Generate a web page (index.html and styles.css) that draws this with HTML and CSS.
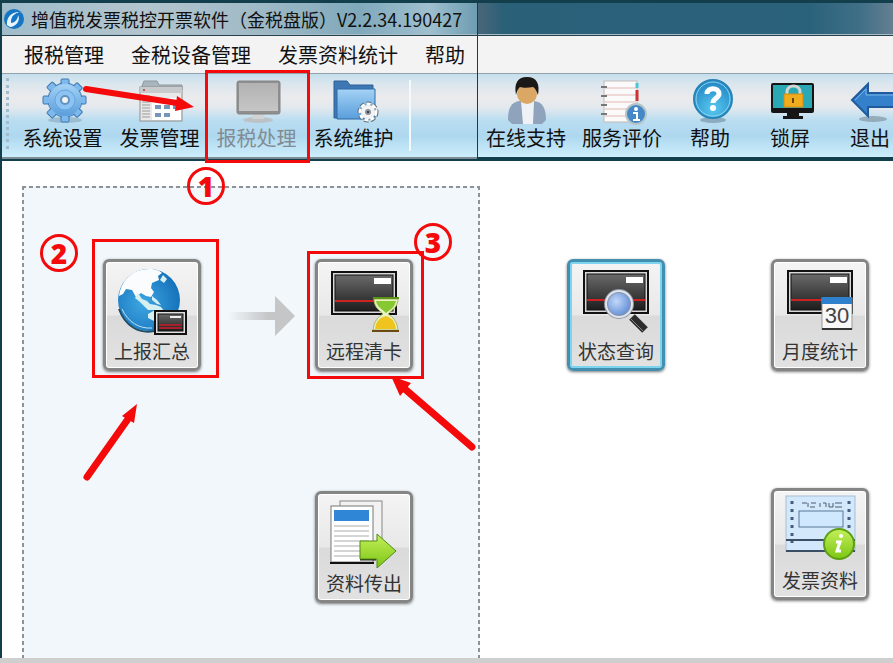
FILE: index.html
```html
<!DOCTYPE html>
<html lang="zh-CN">
<head>
  <meta charset="UTF-8">
  <meta name="viewport" content="width=device-width, initial-scale=1">
  <title>增值税发票税控开票软件</title>
  <link rel="stylesheet" href="styles.css">
</head>
<body>
  <!-- shared gradients and the invoice card symbol -->
  <svg class="defs" width="0" height="0" aria-hidden="true">
    <defs>
      <linearGradient id="blue" x1="0" y1="0" x2="0" y2="1"><stop offset="0" stop-color="#a4d2f5"/><stop offset="1" stop-color="#5a9edc"/></linearGradient>
      <linearGradient id="dark" x1="0" y1="0" x2="0" y2="1"><stop offset="0" stop-color="#6a6a6a"/><stop offset="1" stop-color="#1d1d1d"/></linearGradient>
      <linearGradient id="green" x1="0" y1="0" x2="0" y2="1"><stop offset="0" stop-color="#c4f05a"/><stop offset="1" stop-color="#7cc514"/></linearGradient>
      <linearGradient id="gray" x1="0" y1="0" x2="0" y2="1"><stop offset="0" stop-color="#b2b2b2"/><stop offset="1" stop-color="#c6c6c6"/></linearGradient>
      <linearGradient id="fade" x1="0" y1="0" x2="1" y2="0"><stop offset="0" stop-color="#c4c6c8" stop-opacity="0"/><stop offset="0.6" stop-color="#c4c6c8"/></linearGradient>
      <radialGradient id="ball" cx="0.5" cy="0.75" r="0.8"><stop offset="0" stop-color="#58c8f0"/><stop offset="1" stop-color="#1b7fc0"/></radialGradient>
      <radialGradient id="earth" cx="0.4" cy="0.55" r="0.6"><stop offset="0" stop-color="#3fa6e2"/><stop offset="1" stop-color="#1673bb"/></radialGradient>
      <radialGradient id="lens" cx="0.4" cy="0.4" r="0.7"><stop offset="0" stop-color="#c3d8fa"/><stop offset="1" stop-color="#4f7fd0"/></radialGradient>
      <symbol id="card" viewBox="0 0 66 44">
        <rect x="1" y="1" width="64" height="42" fill="#d8d8d8" stroke="#111" stroke-width="2"/>
        <rect x="4" y="4" width="58" height="36" fill="url(#dark)" stroke="#111" stroke-width="1"/>
        <rect x="43" y="7" width="17" height="6" fill="#fff"/>
        <path d="M4 30H62" stroke="#c22" stroke-width="2"/>
      </symbol>
    </defs>
  </svg>

  <header class="app-head">
    <div class="pane pane-left">
      <div class="titlebar">
        <svg class="logo" viewBox="0 0 22 22"><circle cx="11" cy="11" r="10" fill="#1676c4"/><path d="M4 17C3 9 9 3 18 4C12 5 8 9 8 15C12 15 15 11 15 7C18 12 13 19 7 19" fill="#e6f5ff"/><path d="M9 14C9 9 13 6 17 5" fill="none" stroke="#1676c4" stroke-width="2"/></svg>
        <h1>增值税发票税控开票软件（金税盘版）V2.2.34.190427</h1>
      </div>
      <nav class="menubar">
        <button type="button">报税管理</button>
        <button type="button">金税设备管理</button>
        <button type="button">发票资料统计</button>
        <button type="button">帮助</button>
      </nav>
      <div class="toolbar toolbar-main">
        <div class="target">
          <button type="button" class="tool">
            <svg viewBox="0 0 46 46">
              <ellipse cx="25" cy="42" rx="17" ry="3" fill="#7d9bb0" opacity="0.5"/>
              <g fill="#7db9ec" stroke="#3f79b0">
                <rect x="21" y="1" width="8" height="43" rx="1"/>
                <rect x="21" y="1" width="8" height="43" rx="1" transform="rotate(45 25 22)"/>
                <rect x="21" y="1" width="8" height="43" rx="1" transform="rotate(90 25 22)"/>
                <rect x="21" y="1" width="8" height="43" rx="1" transform="rotate(135 25 22)"/>
                <circle cx="25" cy="22" r="17"/>
              </g>
              <path d="M25 3v38M6 22h38M12 9l26 26M38 9L12 35" stroke="#7db9ec" stroke-width="6"/>
              <circle cx="25" cy="22" r="16" fill="url(#blue)"/>
              <circle cx="25" cy="22" r="10" fill="#8cc3f2" stroke="#66a5de"/>
              <circle cx="25" cy="22" r="4" fill="#f1f3f4" stroke="#5f92c0" stroke-width="2"/>
            </svg>
            <span>系统设置</span>
          </button>
          <svg class="mark arrow-one" viewBox="0 0 114 32"><path d="M5 7L96 21" stroke="#f40a0a" stroke-width="6" stroke-linecap="round"/><path d="M96 14L113 25L94 29Z" fill="#f40a0a"/></svg>
        </div>
        <button type="button" class="tool">
          <svg viewBox="0 0 46 46">
            <path d="M5 8l2-5h13l2 4h23v5H5z" fill="#a9b5bd" stroke="#8d979d"/>
            <rect x="3" y="9" width="42" height="34" fill="#e9e9ea" stroke="#8f8f90"/>
            <rect x="3" y="9" width="42" height="6" fill="#c9cacb"/>
            <rect x="15" y="20" width="29" height="22" fill="#fff"/>
            <path d="M5 18h8M5 21h8M5 24h8M5 27h8M5 30h8M5 33h8M5 36h8M5 39h8" stroke="#999"/>
            <path d="M18 29h6M27 29h6M36 29h6M18 37h6M27 37h6" stroke="#7795b8" stroke-width="4"/>
            <circle cx="7" cy="12" r="1" fill="#b33"/>
          </svg>
          <span>发票管理</span>
        </button>
        <div class="target">
          <button type="button" class="tool" disabled>
            <svg viewBox="0 0 46 46">
              <ellipse cx="24" cy="42" rx="15" ry="3" fill="#bcc2c5"/>
              <path d="M19 35h10l1 6H18z" fill="#d2d2d2"/>
              <rect x="3" y="3" width="43" height="33" rx="2" fill="#8f8f8f" stroke="#848484"/>
              <rect x="5" y="5" width="39" height="28" fill="url(#gray)"/>
            </svg>
            <span>报税处理</span>
          </button>
          <div class="mark frame frame-one"></div>
          <b class="mark badge badge-one">1</b>
        </div>
        <button type="button" class="tool">
          <svg viewBox="0 0 46 46">
            <path d="M3 40V3h13l3 4h23v33z" fill="#3d78b4" stroke="#2c5f97"/>
            <path d="M6 41V11h38v30z" fill="url(#blue)" stroke="#2f6aa6"/>
            <circle cx="37" cy="34" r="8" fill="none" stroke="#5d6a74" stroke-width="5" stroke-dasharray="4 2"/>
            <circle cx="37" cy="34" r="8" fill="none" stroke="#fff" stroke-width="3" stroke-dasharray="4 2"/>
            <circle cx="37" cy="34" r="7" fill="#f3f3f3"/>
            <circle cx="37" cy="34" r="3" fill="#8b9299"/><circle cx="37" cy="34" r="1" fill="#222"/>
          </svg>
          <span>系统维护</span>
        </button>
        <i class="divider"></i>
      </div>
    </div>

    <div class="pane pane-right">
      <div class="titlebar"></div>
      <div class="menubar"></div>
      <div class="toolbar">
        <button type="button" class="tool">
          <svg viewBox="0 0 46 46">
            <path d="M5 42c0-12 3-18 12-19h14c9 1 12 8 12 19l-4 4H9z" fill="#8fa3bd"/>
            <path d="M18 23h13l-1 23H20z" fill="#eef2f6"/>
            <circle cx="24" cy="16" r="10" fill="#dba765"/>
            <path d="M13 17C11 6 14-1 24-1s13 7 11 18c-2-5-3-7-5-8-5 1-10 1-13 0-2 2-3 4-4 8z" fill="#1b1818"/>
          </svg>
          <span>在线支持</span>
        </button>
        <button type="button" class="tool">
          <svg viewBox="0 0 46 46">
            <rect x="5" y="3" width="33" height="41" fill="#fafafa" stroke="#c3b9b9"/>
            <path d="M6 10h31M6 17h31M6 24h31M6 31h31M6 38h31" stroke="#e3b7b4"/>
            <path d="M2 9h6M2 18h6M2 27h6M2 36h6" stroke="#777" stroke-width="2"/>
            <path d="M38 5v5" stroke="#4cc5d6" stroke-width="3"/><path d="M38 12v11" stroke="#c33" stroke-width="3"/>
            <circle cx="37" cy="36" r="10" fill="#4488c8" stroke="#b5c4c8" stroke-width="2"/>
            <circle cx="37" cy="31" r="2" fill="#fff"/><path d="M34 35h4v7M34 42h7" stroke="#fff" stroke-width="2" fill="none"/>
          </svg>
          <span>服务评价</span>
        </button>
        <button type="button" class="tool tool-narrow">
          <svg viewBox="0 0 46 46">
            <ellipse cx="26" cy="42" rx="13" ry="3" fill="#7895a8" opacity="0.7"/>
            <circle cx="26" cy="21" r="19" fill="url(#ball)" stroke="#2784b8" stroke-width="2"/>
            <circle cx="26" cy="21" r="17" fill="none" stroke="#8fd7f2"/>
            <path d="M20 16c0-7 12-7 12 0 0 4-6 4-6 9" fill="none" stroke="#fff" stroke-width="5"/><circle cx="26" cy="30" r="3" fill="#fff"/>
          </svg>
          <span>帮助</span>
        </button>
        <button type="button" class="tool tool-narrow">
          <svg viewBox="0 0 46 46">
            <path d="M20 34h12v4h4v3H16v-3h4z" fill="#161616"/>
            <rect x="4" y="5" width="43" height="30" rx="2" fill="#151515"/>
            <rect x="6" y="7" width="39" height="23" fill="#2aa9b4"/>
            <path d="M20 19v-5c0-8 13-8 13 0v5" fill="none" stroke="#d3d7d3" stroke-width="3"/>
            <rect x="17" y="16" width="19" height="13" fill="#f0ac1d" stroke="#d48b10"/>
            <path d="M26 20v5" stroke="#6c4310" stroke-width="2"/>
          </svg>
          <span>锁屏</span>
        </button>
        <button type="button" class="tool tool-narrow">
          <svg viewBox="0 0 46 46">
            <ellipse cx="26" cy="41" rx="14" ry="3" fill="#798a98" opacity="0.6"/>
            <path d="M5 22L21 6v9h32v14H21v9z" fill="#3580cb" stroke="#215a9c" stroke-width="2"/>
            <path d="M8 22L19 11v6h32" fill="none" stroke="#77b4e8"/>
          </svg>
          <span>退出</span>
        </button>
      </div>
    </div>
  </header>

  <main class="workspace">
    <section class="flow">
      <div class="target">
        <button type="button" class="tile">
          <svg viewBox="7 6 84 76">
            <circle cx="46" cy="41" r="31" fill="url(#earth)"/>
            <path d="M16 37C18 22 29 10 46 10c7 0 11 2 13 4l-4 3 1 4-7 3-1 5 3 4-3 5-5-1-5-3-5 4-4-7-6-1-3 5z" fill="#fafcfd"/>
            <path d="M35 34l4 6 5 2 3 3 6 1 5 2 3 4-4 1-6-2-6 0-4-4-4-4-5-4zM49 37l5 4 4 5-4-1-5-4zM57 21l3-5 4 4-3 4zM45 55l7-4 6 3v8h-7l-6-3z" fill="#d6f0f1"/>
            <path d="M16 50C22 67 36 75 51 72" fill="none" stroke="#1f4f68" stroke-width="2"/>
            <path d="M19 50C25 63 36 70 49 69" fill="none" stroke="#bfe3f5" stroke-width="1"/>
            <rect x="52" y="52" width="31" height="23" fill="#e0e0e0" stroke="#111" stroke-width="2"/>
            <rect x="55" y="55" width="25" height="17" fill="url(#dark)" stroke="#111"/>
            <path d="M56 66h23M56 69h23" stroke="#a5202a" stroke-width="2"/>
            <path d="M67 58h11" stroke="#eee" stroke-width="2"/>
          </svg>
          <span>上报汇总</span>
        </button>
        <div class="mark frame frame-two"></div>
        <b class="mark badge badge-two">2</b>
        <svg class="mark arrow-two" viewBox="0 0 60 84"><path d="M7 77L48 19" stroke="#f40a0a" stroke-width="7" stroke-linecap="round"/><path d="M57 4L42 16L54 23Z" fill="#f40a0a"/></svg>
      </div>
      <svg class="step" viewBox="0 0 68 42"><path d="M0 17H47V1L67 21L47 41V25H0Z" fill="url(#fade)"/></svg>
      <div class="target">
        <button type="button" class="tile">
          <svg viewBox="7 6 84 76">
            <use href="#card" x="16" y="12" width="66" height="44"/>
            <path d="M59 40h24c0 8-6 11-10 15 5 3 9 7 10 16H58c1-9 5-13 10-16-4-4-9-7-9-15z" fill="#e9f2c5" stroke="#a9b760"/>
            <path d="M61 42h20c-1 6-6 9-10 12-4-4-9-6-10-12z" fill="#86c732"/>
            <path d="M60 70c1-9 5-11 11-13 6 2 9 5 10 13z" fill="#efc41e"/>
            <path d="M58 39h26" stroke="#5b9415" stroke-width="2"/><path d="M57 72h27" stroke="#6b4a14" stroke-width="2"/>
          </svg>
          <span>远程清卡</span>
        </button>
        <div class="mark frame frame-three"></div>
        <b class="mark badge badge-three">3</b>
        <svg class="mark arrow-three" viewBox="0 0 90 80"><path d="M83 73L17 16" stroke="#f40a0a" stroke-width="7" stroke-linecap="round"/><path d="M2 2L22 9L11 22Z" fill="#f40a0a"/></svg>
      </div>
      <button type="button" class="tile tile-export">
        <svg viewBox="7 6 84 76">
          <rect x="25" y="10" width="42" height="54" fill="#f2f2f2" stroke="#888"/>
          <rect x="16" y="15" width="42" height="56" fill="#fff" stroke="#777"/>
          <rect x="19" y="19" width="35" height="11" fill="#2f86d6"/>
          <path d="M19 35h35M19 40h35M19 45h35M19 50h35M19 55h35M19 60h35M19 65h35" stroke="#aaa"/>
          <path d="M15 72h44" stroke="#111" stroke-width="2"/>
          <path d="M45 68h16" stroke="#222" stroke-width="3"/>
          <path d="M45 50h17v-7l19 17-19 17v-9H45z" fill="url(#green)" stroke="#4f8a12"/>
        </svg>
        <span>资料传出</span>
      </button>
    </section>

    <section class="queries">
      <button type="button" class="tile active">
        <svg viewBox="7 6 84 76">
          <use href="#card" x="16" y="11" width="66" height="44"/>
          <path d="M65 58L78 71" stroke="#2c2c2c" stroke-width="8"/>
          <path d="M64 60L77 73" stroke="#888" stroke-width="1"/>
          <circle cx="52" cy="45" r="13" fill="url(#lens)" stroke="#8d95a5" stroke-width="4"/>
          <circle cx="52" cy="45" r="13" fill="none" stroke="#dfe5ee" stroke-width="2"/>
        </svg>
        <span>状态查询</span>
      </button>
      <button type="button" class="tile">
        <svg viewBox="7 6 84 76">
          <use href="#card" x="16" y="11" width="66" height="44"/>
          <rect x="51" y="39" width="30" height="31" fill="#f8f8f8" stroke="#999"/>
          <rect x="51" y="38" width="30" height="7" fill="#2f80cc"/>
          <path d="M51 70h30" stroke="#333" stroke-width="2"/>
          <text class="day" x="66" y="64" text-anchor="middle">30</text>
        </svg>
        <span>月度统计</span>
      </button>
      <button type="button" class="tile tile-invoice">
        <svg viewBox="7 6 84 76">
          <rect x="15" y="8" width="69" height="55" fill="#d3e8fb" stroke="#a5bdd5"/>
          <path d="M21 13v42M78 13v30" stroke="#445f7d" stroke-width="3" stroke-dasharray="3 5"/>
          <path d="M31 15h5M37 15v4M39 19h5M40 15h5M49 15v4M52 15h3v4M58 15v4h4v-4M64 15h7M64 19h7" stroke="#4c5d70" fill="none"/>
          <rect x="28" y="23" width="44" height="16" fill="#cfe8fd" stroke="#5b7896"/>
          <path d="M15 52h69M15 63h69" stroke="#3a4f64" stroke-width="2"/>
          <circle cx="68" cy="56" r="15" fill="url(#green)" stroke="#5c9f12" stroke-width="2"/>
          <circle cx="70" cy="48" r="2" fill="#fff"/><path d="M65 54h4l-3 9h4" fill="none" stroke="#fff" stroke-width="3"/>
        </svg>
        <span>发票资料</span>
      </button>
    </section>
  </main>
  <footer class="statusbar"></footer>
</body>
</html>
```
FILE: styles.css
```css
* {
  box-sizing: border-box;
}
body {
  margin: 0;
  min-height: 100vh;
  display: flex;
  flex-direction: column;
  font-family: "Noto Sans CJK SC", sans-serif;
  background: #fff;
  color: #111;
  overflow-x: hidden;
}
button {
  font: inherit;
  color: inherit;
  border: 0;
  padding: 0;
  background: none;
  white-space: nowrap;
}
svg {
  display: block;
  overflow: visible;
}
.defs {
  position: absolute;
}

/* header */
.app-head {
  position: relative;
  z-index: 1;
  display: flex;
  padding: 3px 0 0 2px;
  background: #123f4b;
}
.pane-left {
  flex: 0 0 475px;
  border-bottom: 2px solid #7c8c94;
  margin-bottom: 2px;
}
.pane-right {
  flex: 1;
  min-width: 0;
  overflow: hidden;
  margin-left: 1px;
  margin-bottom: 4px;
}
.titlebar {
  height: 33px;
  display: flex;
  align-items: center;
  gap: 6px;
  padding-left: 1px;
  border-bottom: 1px solid #24424f;
  box-shadow: inset 0 -1px #a9bcc6;
  background: linear-gradient(90deg, #9fbccb, #b3c5ce 30%, #9eb9c6 55%, #7fa9bb 75%, #9fbfce 90%, #6d9db1);
}
.pane-right .titlebar {
  background: linear-gradient(90deg, #4a6678, #2b6079 6%, #2b627b 80%, #3f6f87 92%, #667f91);
}
.titlebar h1 {
  margin: 0;
  font-size: 18px;
  font-weight: 400;
  line-height: 24px;
  white-space: nowrap;
}
.logo {
  width: 22px;
  height: 22px;
}
.menubar {
  height: 38px;
  display: flex;
  align-items: center;
  gap: 27px;
  padding-left: 22px;
  font-size: 20px;
  border-bottom: 1px solid #93a1a8;
  background: #f3f3f4;
}
.toolbar {
  height: 83px;
  display: flex;
  background: linear-gradient(#c5dfed, #dbe6ed 12%, #ebebed 28%, #e4e9ee 40%, #b9ddf1 56%, #aed8ef 75%, #cdeefb);
}
.toolbar-main {
  padding-left: 12px;
  position: relative;
}
.toolbar-main::before {
  content: "";
  position: absolute;
  left: 4px;
  top: 4px;
  bottom: 8px;
  border-left: 3px dotted #a3bccb;
}
.tool {
  flex: none;
  width: 97px;
  padding-top: 4px;
  display: flex;
  flex-direction: column;
  align-items: center;
  font-size: 20px;
  line-height: 28px;
}
.pane-right .tool {
  width: 96px;
}
.pane-right .tool-narrow {
  width: 80px;
}
.tool svg {
  width: 46px;
  height: 46px;
}
.tool:disabled {
  color: #838c92;
}
.divider {
  width: 2px;
  margin: 6px 0 6px 7px;
  background: #f4fafc;
}

/* workspace */
.workspace {
  flex: 1;
  display: flex;
  align-items: stretch;
  padding: 25px 0 0 20px;
  border-left: 2px solid #123f4b;
}
.flow {
  flex: 0 0 458px;
  display: grid;
  grid-template-columns: 98px 114px 98px;
  align-content: start;
  gap: 120px 0;
  padding: 73px 0 48px 81px;
  background:
    repeating-linear-gradient(90deg, #8d9296 0 4px, transparent 4px 7px) 0 0 / 100% 2px no-repeat,
    repeating-linear-gradient(#8d9296 0 4px, transparent 4px 7px) 0 0 / 2px 100% no-repeat,
    repeating-linear-gradient(#8d9296 0 4px, transparent 4px 7px) 100% 0 / 2px 100% no-repeat,
    #f2f7fb;
}
.queries {
  flex: 1;
  display: grid;
  grid-template-columns: 98px 98px;
  align-content: start;
  gap: 117px 106px;
  padding: 73px 0 0 87px;
}
.tile {
  width: 98px;
  height: 112px;
  padding-top: 3px;
  display: flex;
  flex-direction: column;
  align-items: center;
  font-size: 19px;
  line-height: 20px;
  color: #333;
  border: 3px solid #858585;
  border-radius: 6px;
  background: linear-gradient(#f4f4f4, #e8e8e8 50%, #dadada 51%, #e2e2e2);
  box-shadow: inset 0 0 0 1px #fff, 0 1px 3px #777;
}
.tile.active {
  border-color: #438fb0;
  box-shadow: inset 0 0 0 2px #7cd4ee, 0 1px 3px #777;
}
.tile svg {
  width: 84px;
  height: 76px;
  flex: none;
}
.tile-export,
.tile-invoice {
  justify-self: end;
}
.tile-export {
  grid-column: 3;
}
.tile-invoice {
  grid-column: 2;
}
.day {
  font: 22px "Liberation Sans", sans-serif;
  fill: #444;
}
.step {
  width: 68px;
  height: 42px;
  margin: 36px 0 0 27px;
}
.statusbar {
  height: 5px;
  background: #cfcfcf;
}

/* red guide marks */
.target {
  position: relative;
}
.mark {
  position: absolute;
  pointer-events: none;
}
.frame {
  border: 3px solid #f40a0a;
}
.frame-one {
  inset: -4px -5px -6px -3px;
}
.frame-two {
  inset: -20px -18px auto -11px;
  height: 139px;
}
.frame-three {
  inset: -8px -11px auto -8px;
  height: 128px;
}
.badge {
  width: 38px;
  height: 38px;
  border: 3px solid #f40a0a;
  border-radius: 50%;
  color: #f40a0a;
  font: 800 28px/32px "Open Sans", sans-serif;
  text-align: center;
}
.badge-one {
  left: -21px;
  top: 93px;
}
.badge-two {
  left: -63px;
  top: -25px;
}
.badge-three {
  left: 99px;
  top: -36px;
}
.arrow-one {
  left: 67px;
  top: 8px;
  width: 114px;
  height: 32px;
  z-index: 1;
}
.arrow-two {
  left: -23px;
  top: 141px;
  width: 60px;
  height: 84px;
}
.arrow-three {
  left: 74px;
  top: 115px;
  width: 90px;
  height: 80px;
}
```
